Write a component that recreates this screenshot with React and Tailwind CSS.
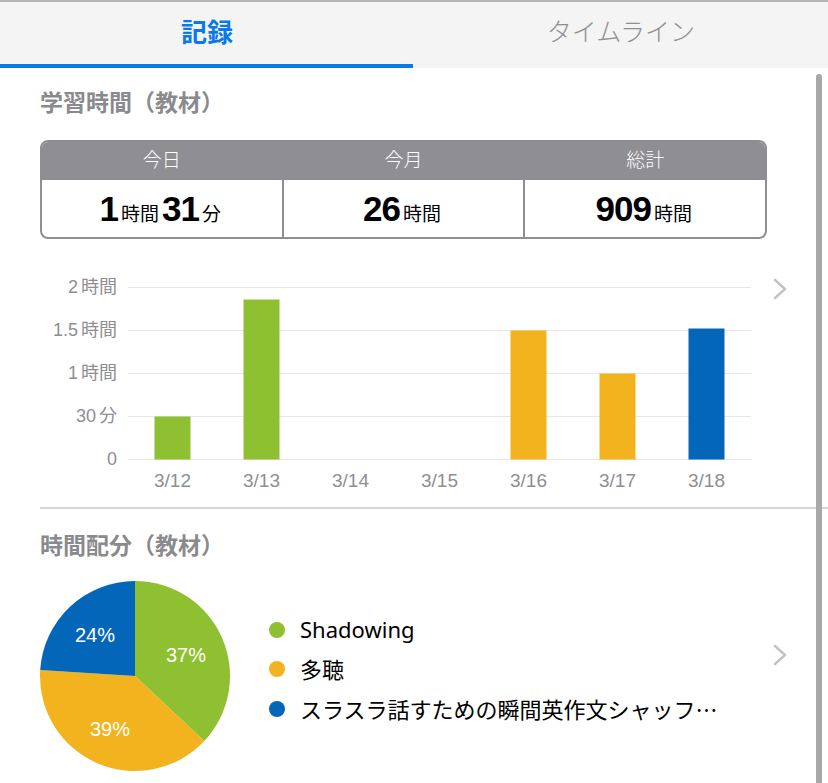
import React from "react";

const bars = [
  { label: "3/12", h: 43, color: "#8fc031" },
  { label: "3/13", h: 160, color: "#8fc031" },
  { label: "3/14", h: 0, color: "#8fc031" },
  { label: "3/15", h: 0, color: "#8fc031" },
  { label: "3/16", h: 129, color: "#f2b31f" },
  { label: "3/17", h: 86, color: "#f2b31f" },
  { label: "3/18", h: 131, color: "#0466b8" },
];

const yLabels = [
  ["2", "時間"],
  ["1.5", "時間"],
  ["1", "時間"],
  ["30", "分"],
  ["0", ""],
];

function Chevron() {
  return (
    <svg width="16" height="22" viewBox="0 0 16 22">
      <polyline
        points="3,2 13,11 3,20"
        fill="none"
        stroke="#c4c4c7"
        strokeWidth="2.6"
        strokeLinecap="round"
        strokeLinejoin="round"
      />
    </svg>
  );
}

function StatCell({ title, children, last }) {
  return (
    <div className={`flex flex-1 flex-col ${last ? "" : "border-r-2 border-[#8e8e93]"}`}>
      <div className="flex h-[38px] items-center justify-center bg-[#8e8e93] text-[19px] font-light text-white">
        {title}
      </div>
      <div className="flex h-[57px] items-center justify-center text-black">{children}</div>
    </div>
  );
}

const Num = ({ children }) => (
  <span className="text-[35px] font-bold leading-none tracking-[-1px]">{children}</span>
);
const Unit = ({ children }) => (
  <span className="ml-[3px] mr-[3px] text-[19px] leading-none">{children}</span>
);

export default function App() {
  const legend = [
    ["#8fc031", "Shadowing", false],
    ["#f2b31f", "多聴", false],
    ["#0466b8", "スラスラ話すための瞬間英作文シャッフ", true],
  ];
  return (
    <div className="relative h-[783px] w-[828px] overflow-hidden bg-white font-['Liberation_Sans','Noto_Sans_CJK_JP',sans-serif]">
      {/* Tab bar */}
      <div className="border-t-2 border-[#b3b3b3] bg-[#f4f4f4]">
        <div className="flex h-[66px]">
          <div className="flex w-[414px] flex-col">
            <div className="flex h-[62px] items-center justify-center text-[26px] font-bold text-[#0a7aea]">
              記録
            </div>
            <div className="h-[4px] w-[413px] bg-[#0a7aea]" />
          </div>
          <div className="flex w-[414px] flex-col">
            <div className="flex h-[62px] items-center justify-center text-[25px] font-light text-[#8e8e93]">
              タイムライン
            </div>
          </div>
        </div>
      </div>

      {/* Scrollbar */}
      <div className="absolute bottom-[-6px] right-[6px] top-[74px] w-[6px] rounded-full bg-[#a9a9a9]" />

      <div className="pl-[40px]">
        <h2 className="mt-[20px] text-[23px] font-bold leading-[30px] text-[#8a8a8e]">学習時間（教材）</h2>

        <div className="mt-[22px] flex w-[727px] overflow-hidden rounded-[8px] border-2 border-[#8e8e93]">
          <StatCell title="今日">
            <div className="flex items-baseline">
              <Num>1</Num>
              <Unit>時間</Unit>
              <Num>31</Num>
              <Unit>分</Unit>
            </div>
          </StatCell>
          <StatCell title="今月">
            <div className="flex items-baseline">
              <Num>26</Num>
              <Unit>時間</Unit>
            </div>
          </StatCell>
          <StatCell title="総計" last>
            <div className="flex items-baseline">
              <Num>909</Num>
              <Unit>時間</Unit>
            </div>
          </StatCell>
        </div>

        {/* Bar chart */}
        <div className="mt-[27px] flex">
          <div className="flex w-[88px] flex-col pr-[11px]">
            {yLabels.map(([n, u]) => (
              <div key={n} className="flex h-[43px] items-center justify-end text-[18px] text-[#8e8e93]">
                {n}
                {u && <span className="ml-[3px]">{u}</span>}
              </div>
            ))}
          </div>
          <div className="flex w-[623px] flex-col">
            <svg width="623" height="194" viewBox="0 0 623 194">
              {[0, 1, 2, 3, 4].map((i) => (
                <line key={i} x1="0" x2="623" y1={21.5 + 43 * i} y2={21.5 + 43 * i} stroke="#e6e6e6" strokeWidth="1" />
              ))}
              {bars.map((b, i) =>
                b.h > 0 ? (
                  <rect key={b.label} x={89 * i + 26.5} y={193.5 - b.h} width="36" height={b.h} fill={b.color} />
                ) : null
              )}
            </svg>
            <div className="grid h-[42px] grid-cols-7">
              {bars.map((b) => (
                <div key={b.label} className="flex items-center justify-center text-[19px] text-[#8e8e93]">
                  {b.label}
                </div>
              ))}
            </div>
          </div>
          <div className="ml-[21px] pt-[12px]">
            <Chevron />
          </div>
        </div>

        <div className="mt-[5px] h-[2px] bg-[#d6d6d6]" />

        <h2 className="mt-[22px] text-[23px] font-bold leading-[30px] text-[#8a8a8e]">時間配分（教材）</h2>

        {/* Pie chart */}
        <div className="mt-[20px] flex">
          <svg width="190" height="190" viewBox="0 0 190 190">
            <path d="M95,95 L95,0 A95,95 0 0 1 164.25,160.03 Z" fill="#8fc031" />
            <path d="M95,95 L164.25,160.03 A95,95 0 0 1 0.19,89.03 Z" fill="#f2b31f" />
            <path d="M95,95 L0.19,89.03 A95,95 0 0 1 95,0 Z" fill="#0466b8" />
            <text x="146" y="81" textAnchor="middle" fill="#fff" fontSize="20" fontFamily="Liberation Sans, sans-serif">37%</text>
            <text x="55" y="61" textAnchor="middle" fill="#fff" fontSize="20" fontFamily="Liberation Sans, sans-serif">24%</text>
            <text x="70" y="155" textAnchor="middle" fill="#fff" fontSize="20" fontFamily="Liberation Sans, sans-serif">39%</text>
          </svg>
          <div className="ml-[39px] mt-[29px] flex w-[470px] flex-col">
            {legend.map(([c, t, ell]) => (
              <div key={t} className="flex h-[39.5px] items-center">
                <span className="h-[16px] w-[16px] shrink-0 rounded-full" style={{ backgroundColor: c }} />
                <span className="ml-[15px] whitespace-nowrap font-['Noto_Sans','Noto_Sans_CJK_JP',sans-serif] text-[22px] text-black">
                  {t}
                  {ell && <span className="font-['Noto_Sans_CJK_JP',sans-serif]">…</span>}
                </span>
              </div>
            ))}
          </div>
          <div className="ml-[33px] mt-[63px]">
            <Chevron />
          </div>
        </div>
      </div>
    </div>
  );
}
